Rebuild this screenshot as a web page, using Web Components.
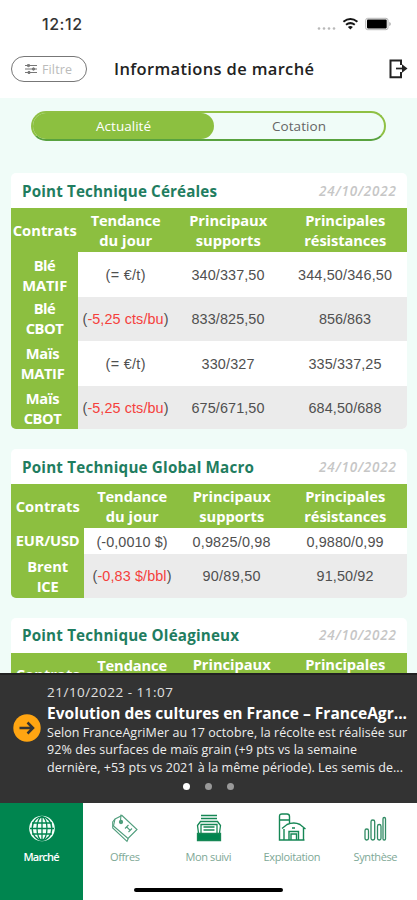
<!DOCTYPE html>
<html lang="fr">
<head>
<meta charset="utf-8">
<title>Informations de marché</title>
<style>
html,body{margin:0;height:900px;overflow:hidden}
body{font-family:"Open Sans","Noto Sans",sans-serif;background:#f0fcf8}
</style>
</head>
<body>
<market-app></market-app>
<script>
const make=(name,html)=>customElements.define(name,class extends HTMLElement{
  connectedCallback(){
    if(this.shadowRoot)return;
    this.attachShadow({mode:'open'}).innerHTML=typeof html==='function'?html(this):html;
  }
});

make('status-bar',`<style>
:host{display:flex;height:48px;box-sizing:border-box;padding:0 26px 0 42px;align-items:center;background:#fff;font:500 16px Inter,"Liberation Sans",sans-serif;color:#333}
.sp{flex:1}svg{display:block}
</style><fit-line w="39">12:12</fit-line><span class="sp"></span>
<svg width="75" height="16" viewBox="315 16 75 16"><g fill="#b9b9b9"><circle cx="318" cy="28.5" r="1.3"/><circle cx="323" cy="28.5" r="1.3"/><circle cx="328" cy="28.5" r="1.3"/><circle cx="333" cy="28.5" r="1.3"/></g>
<g fill="none" stroke="#151515" stroke-width="2"><path d="M342.4 21.7q7-5.4 14 0M345 24.8q4.400-3.400 8.800 0"/></g><path d="M346.900 26.900q2.500-1.800 5 0L349.400 29.600z" fill="#151515"/>
<rect x="364.700" y="18.300" width="22.300" height="11.400" rx="2" fill="none" stroke="#b5b5b5"/><rect x="366" y="19.600" width="19.700" height="8.800" rx=".8" fill="#000"/><path d="M388.300 22v4q1.500-.7 1.500-2t-1.500-2" fill="#aaa"/></svg>`);

make('filter-button',`<style>
:host{display:flex;box-sizing:border-box;width:76px;height:26px;border:1px solid #777;border-radius:13px;align-items:center;padding-left:13px;gap:5px;color:#bbb;font-size:12.500px}
svg{display:block}
</style><svg width="12" height="10" viewBox="0 0 12 10" stroke="#777" fill="#777"><path d="M0 1.500h12M0 5h12M0 8.500h12" stroke-width="1"/><circle cx="3.500" cy="1.500" r="1.200"/><circle cx="8.500" cy="5" r="1.200"/><circle cx="4" cy="8.500" r="1.200"/></svg><fit-line w="29"><slot></slot></fit-line>`);

make('app-header',`<style>
:host{display:flex;height:50px;box-sizing:border-box;background:#fff;align-items:flex-start;padding:8px 9px 0 11px}
h1{margin:0;flex:1;padding:3px 0 0 27px;font-size:16.500px;line-height:20px;font-weight:600;color:#222}
svg{display:block;margin-top:3px}
</style><filter-button>Filtre</filter-button><h1><fit-line w="199">Informations de marché</fit-line></h1>
<svg width="19" height="20" viewBox="0 0 19 20"><path d="M12 6V1.500H1.500v16.800H12V13" fill="none" stroke="#222" stroke-width="2"/><path d="M7 9.500h8" stroke="#222" stroke-width="1.700"/><path d="M13 5.300L18.500 9.500L13 13.700z" fill="#222"/></svg>`);

make('segment-switch',`<style>
:host{display:flex;box-sizing:border-box;margin:13px 31px 0;height:30px;border:2px solid #8fc044;border-bottom-color:#58a23f;border-radius:15px;overflow:hidden;font-size:13.500px;color:#666}
div{display:flex;align-items:center;justify-content:center}
.on{width:181px;background:#8cc040;color:#fff;border-radius:0 13px 13px 0}.off{flex:1}
</style><div class="on"><fit-line w="54">Actualité</fit-line></div><div class="off"><fit-line w="53">Cotation</fit-line></div>`);

make('report-card',e=>`<style>
:host{display:block;margin:0 10px 0 11px;border-radius:5px;overflow:hidden;background:#fff}
header{display:flex;height:${e.getAttribute('head')}px;box-sizing:border-box;align-items:center;justify-content:space-between;padding:0 11px;font-size:15.200px;font-weight:700;color:#1f7d60}
.date{font-size:13.500px;font-style:italic;font-weight:600;color:#c6c6c6}
</style><header><fit-line w="${e.getAttribute('tw')}">${e.getAttribute('title-text')}</fit-line><fit-line class="date" w="76">24/10/2022</fit-line></header><slot></slot>`);

make('quote-row',e=>{
  const v=e.getAttribute('cells').split('|').map(c=>{
    const [t,w]=c.split('@');
    const inner=t.includes('~')?`(<span class="red">${t.replace('~','')}</span>)`:t;
    return w?`<div class="v"><fit-line w="${w}">${inner}</fit-line></div>`:'';
  }).join('');
  return `<style>
:host{display:grid;grid-template-columns:var(--cols);height:${e.getAttribute('h')}px;background:#fff}
:host([alt]){background:#ebebeb}
.v{display:flex;align-items:center;justify-content:center;font:14.400px "Liberation Sans",Arial,sans-serif;color:#505050;padding-top:1px;box-sizing:border-box}
.red{color:#f5403c}
</style><slot></slot>${v}`;});

make('head-cell',e=>`<style>
:host{display:flex;flex-direction:column;align-items:center;justify-content:center;background:#8cbf40;color:#fff;font-size:14.700px;font-weight:700;line-height:20px;box-sizing:border-box;margin-right:-.4px;padding-right:${e.getAttribute('pr')||0}px;padding-top:${e.getAttribute('pt')||1}px;padding-bottom:${e.getAttribute('pb')||0}px}
</style>${e.getAttribute('lines').split('|').map(c=>{const [t,w]=c.split('@');return `<fit-line w="${w}">${t}</fit-line>`}).join('')}`);

make('news-ticker',`<style>
:host{display:flex;box-sizing:border-box;height:130px;background:#333;border-top:2px solid #222;color:#eee;padding:8px 8px 0 13px;gap:6px;position:absolute;left:0;right:0;top:673px}
.ico{margin-top:31px;flex:none;display:block}
.txt{display:flex;flex-direction:column;align-items:flex-start}
.d{font-size:13.500px;line-height:19px;color:#e0e0e0}.t{font-size:15.500px;line-height:22px;font-weight:700;color:#fff}
.b{font-size:12.500px;line-height:17.400px;color:#eee}
.dots{display:flex;gap:15px;padding:7px 0 0 136px}
i{width:7px;height:7px;border-radius:50%;background:#999}i:first-child{background:#fff}
</style><svg class="ico" width="28" height="28" viewBox="0 0 28 28"><circle cx="14" cy="14" r="13.700" fill="#ffa512"/><path d="M6.500 14h13M14.500 8.500l5.500 5.500l-5.500 5.500" fill="none" stroke="#333" stroke-width="2.500"/></svg>
<div class="txt"><fit-line class="d" w="125">21/10/2022 - 11:07</fit-line><fit-line class="t" w="359">Evolution des cultures en France – FranceAgr...</fit-line>
<fit-line class="b" w="359">Selon FranceAgriMer au 17 octobre, la récolte est réalisée sur</fit-line><fit-line class="b" w="309">92% des surfaces de maïs grain (+9 pts vs la semaine</fit-line><fit-line class="b" w="355">dernière, +53 pts vs 2021 à la même période). Les semis de...</fit-line>
<div class="dots"><i></i><i></i><i></i></div></div>`);

make('nav-item',e=>`<style>
:host{display:flex;flex-direction:column;align-items:center;padding-top:9px;color:#7ea896;font-size:11px;line-height:16px;gap:5px;box-sizing:border-box}
:host([active]){background:#00854f;color:#fff;font-weight:600}
::slotted(svg){display:block;width:30px;height:32px}
</style><slot></slot><fit-line w="${e.getAttribute('w')}">${e.getAttribute('label')}</fit-line>`);

make('tab-bar',`<style>
:host{display:grid;grid-template-columns:83px 84px 83px 84px 83px;height:97px;background:#fff;position:absolute;left:0;right:0;top:803px}
.home{position:absolute;left:134px;top:85px;width:149px;height:4px;border-radius:2px;background:#000}
</style>
<nav-item active label="Marché" w="35"><svg viewBox="0 0 30 32"><circle cx="15" cy="16.500" r="12.800" fill="#f4fff9"/><g fill="none" stroke="#00854f" stroke-width="1.300"><ellipse cx="15" cy="16.500" rx="5" ry="11.700"/><ellipse cx="15" cy="16.500" rx="9.800" ry="11.700"/><path d="M15 4.500v24M3 16.500h24M5 11h20M5 22h20"/></g></svg></nav-item>
<nav-item label="Offres" w="29"><svg viewBox="0 0 30 32" fill="none" stroke="#4f9d7c" stroke-width="1.100"><path d="M5 7L12 3.500L27 17.500L18 26.500L3.500 14z"/><path d="M5 7L2.700 10v6L17 29.300l1.300-2.800"/><circle cx="11" cy="10" r="1.600" fill="#4f9d7c"/><path d="M10.500 8.500L11 2.500M15 16.500l3.500-3.500M18.500 20l3.500-3.500M16.700 15l3.500 3.300"/></svg></nav-item>
<nav-item label="Mon suivi" w="45"><svg viewBox="0 0 30 32" fill="none" stroke="#168755" stroke-width="1.300"><path d="M7 3.500h16M7 6.500h16" stroke-width="1.600"/><path d="M4.500 21L3.500 13.500L6.500 9.500h17L26.500 13.500L25.500 21M7 21V12.500h16V21M9.500 15h11M9.500 18h11"/><path d="M3.500 21.500h23v7h-23z" fill="#00854f"/></svg></nav-item>
<nav-item label="Exploitation" w="56"><svg viewBox="0 0 30 32" fill="none" stroke="#168755" stroke-width="1.400"><path d="M2.500 28V4.500Q2.500 2 5 2h5Q12.500 2 12.500 4.500V11M2.500 8h10M7 28V17M26.500 28V15M1.800 28H27.500M5 16.500L10 12.500Q17 9.500 23 12.500L28.500 17M12 28v-8.500h9.500V28M14 28v-6h5.500v6M15 16h3"/></svg></nav-item>
<nav-item label="Synthèse" w="43"><svg viewBox="0 0 30 32" fill="none" stroke="#318b64" stroke-width="1.300"><rect x="4" y="17" width="3.500" height="11" rx="1.700"/><rect x="10" y="8" width="3.700" height="20" rx="1.800"/><rect x="16.500" y="12.500" width="3.500" height="15.500" rx="1.700"/><rect x="22" y="5.500" width="2.500" height="22.500" rx="1.200"/></svg></nav-item>
<div class="home"></div>`);

const head=`<quote-row h="44" cells=""><head-cell pt="0" pb="1" lines="Contrats@63"></head-cell><head-cell pt="0" lines="Tendance@69|du jour@52"></head-cell><head-cell pt="0" pb="1" lines="Principaux@77|supports@64"></head-cell><head-cell pt="0" pb="1" lines="Principales@79|résistances@81"></head-cell></quote-row>`;
const peek=`<quote-row h="44" cells=""><head-cell pt="0" pb="2" lines="Contrats@63"></head-cell><head-cell pt="0" pb="20" lines="Tendance@69"></head-cell><head-cell pt="0" pb="22" lines="Principaux@77"></head-cell><head-cell pt="0" pb="22" lines="Principales@79"></head-cell></quote-row>`;
make('market-app',`<style>
:host{display:block;position:relative;width:417px;height:900px;overflow:hidden;background:#f0fcf8}
.feed{display:flex;flex-direction:column;gap:20px;padding-top:32px}
.a{--cols:67px 95px 110px 124px}.b{--cols:73px 96px 103px 124px}
</style>
<status-bar></status-bar><app-header></app-header><segment-switch></segment-switch>
<div class="feed">
<report-card class="a" head="35" title-text="Point Technique Céréales" tw="194">${head}
<quote-row h="44.500" cells="(= €/t)@39|340/337,50@72|344,50/346,50@93"><head-cell lines="Blé@21|MATIF@44"></head-cell></quote-row>
<quote-row alt h="44.500" cells="-5,25 cts/bu~@85|833/825,50@72|856/863@51"><head-cell pt="0" pb="1" lines="Blé@21|CBOT@37"></head-cell></quote-row>
<quote-row h="44.500" cells="(= €/t)@39|330/327@52|335/337,25@72"><head-cell pr="4" pt="0" lines="Maïs@33|MATIF@43"></head-cell></quote-row>
<quote-row alt h="43.500" cells="-5,25 cts/bu~@85|675/671,50@72|684,50/688@72"><head-cell pr="4" pt="2" lines="Maïs@33|CBOT@37"></head-cell></quote-row></report-card>
<report-card class="b" head="35" title-text="Point Technique Global Macro" tw="231">${head}
<quote-row h="26" cells="(-0,0010 $)@70|0,9825/0,98@77|0,9880/0,99@76"><head-cell pt="0" pb="2" lines="EUR/USD@63"></head-cell></quote-row>
<quote-row alt h="43.500" cells="-0,83 $/bbl~@78|90/89,50@57|91,50/92@56"><head-cell pt="0" lines="Brent@40|ICE@21"></head-cell></quote-row></report-card>
<report-card class="b" head="35" title-text="Point Technique Oléagineux" tw="216">${peek}</report-card>
</div>
<news-ticker></news-ticker><tab-bar></tab-bar>`);

/* A single line of text whose tracking is adjusted so that it fills the width w. */
customElements.define('fit-line',class extends HTMLElement{
  connectedCallback(){
    if(this.shadowRoot)return;
    this.attachShadow({mode:'open'}).innerHTML='<style>:host{display:block;flex:none;white-space:nowrap;width:max-content}span{display:inline-block}</style><span><slot></slot></span>';
    const s=this.shadowRoot.querySelector('span');
    let text=this.textContent;
    if(!text.trim())text=this.getRootNode().host.textContent;
    const n=text.trim().length;
    const d=(+this.getAttribute('w')+1-s.getBoundingClientRect().width)/(n-1);
    s.style.letterSpacing=d+'px';s.style.marginRight=-d+'px';
  }
});
</script>
</body>
</html>
